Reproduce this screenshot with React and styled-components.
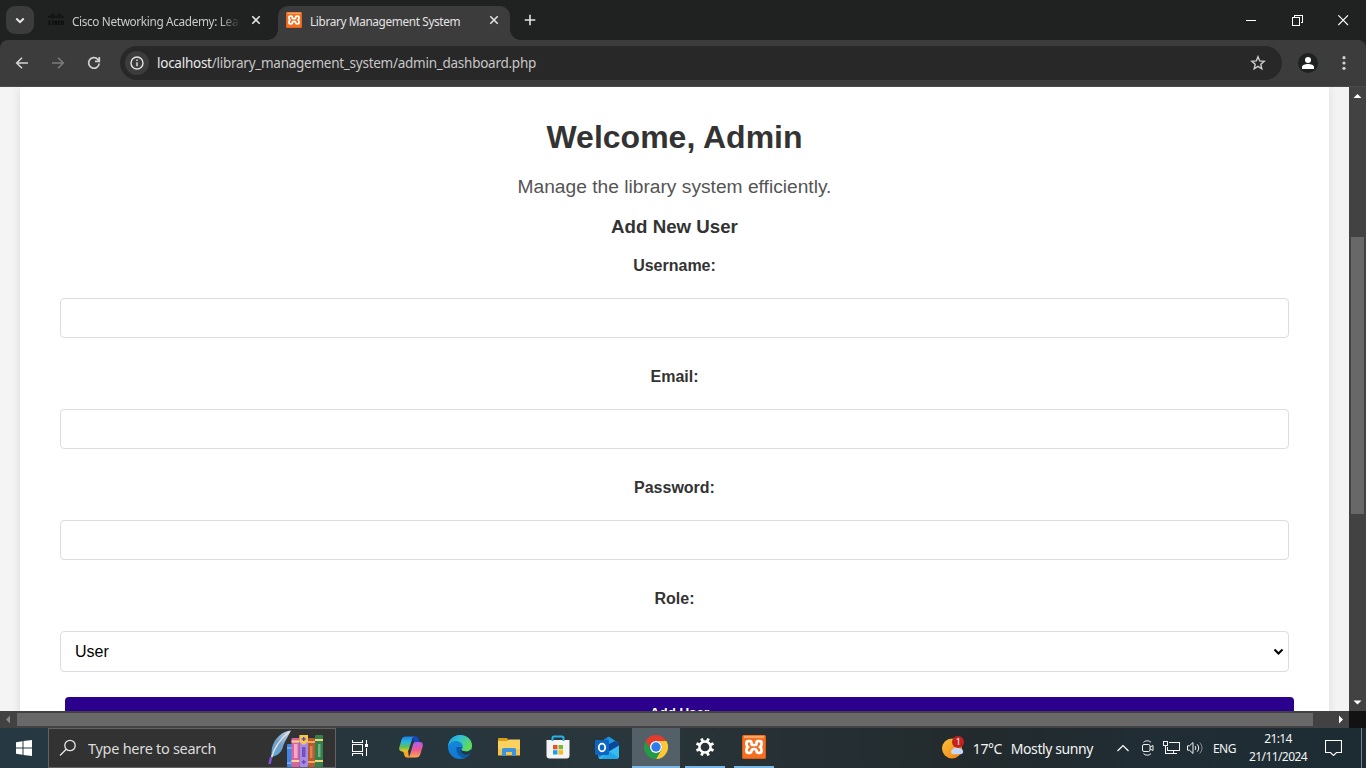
import React from "react";
import styled, { createGlobalStyle } from "styled-components";

const Global = createGlobalStyle`
  *, *::before, *::after { box-sizing: border-box; }
  html, body { margin: 0; padding: 0; height: 100%; overflow: hidden; }
  body { font-family: "Liberation Sans", Arial, sans-serif; background: #fff; }
  svg { display: block; flex: none; }
`;

const UI = `"Noto Sans", "Open Sans", sans-serif`;

const Screen = styled.div`
  width: 1366px;
  height: 768px;
  display: flex;
  flex-direction: column;
  overflow: hidden;
`;

/* ---------- Browser frame ---------- */
const TabStrip = styled.div`
  height: 40px;
  flex: none;
  display: flex;
  align-items: flex-end;
  background: #202221;
  padding-left: 6px;
`;
const TabSearch = styled.div`
  width: 28px;
  height: 28px;
  margin-bottom: 6px;
  border-radius: 9px;
  background: #3c3c3c;
  display: grid;
  place-items: center;
`;
const Tab = styled.div`
  position: relative;
  width: ${(p) => p.$width}px;
  height: 34px;
  display: flex;
  align-items: center;
  padding: 0 ${(p) => p.$right}px 6px ${(p) => p.$left}px;
  border-radius: 10px 10px 0 0;
  background: ${(p) => (p.$active ? "#3c3c3c" : "transparent")};
  ${(p) =>
    p.$active &&
    `
    &::before, &::after {
      content: "";
      position: absolute;
      bottom: 0;
      width: 10px;
      height: 10px;
    }
    &::before { left: -10px; background: radial-gradient(circle at 0 0, transparent 9.5px, #3c3c3c 10px); }
    &::after { right: -10px; background: radial-gradient(circle at 100% 0, transparent 9.5px, #3c3c3c 10px); }
  `}
`;
const TabTitle = styled.span`
  flex: 1;
  margin: 1px ${(p) => (p.$fade ? 8 : 12)}px 0 8px;
  overflow: hidden;
  white-space: nowrap;
  font: 11.8px/18px ${UI};
  letter-spacing: ${(p) => p.$spacing}px;
  color: ${(p) => (p.$fade ? "#c9cbca" : "#e3e3e3")};
  ${(p) => p.$fade && "mask-image: linear-gradient(90deg, #000 calc(100% - 20px), transparent);"}
`;
const NewTab = styled.div`
  width: 40px;
  height: 40px;
  display: grid;
  place-items: center;
`;
const WindowControls = styled.div`
  margin-left: auto;
  height: 40px;
  display: flex;
`;
const WindowButton = styled.div`
  width: 46px;
  height: 40px;
  display: grid;
  place-items: center;
`;
const ToolbarBack = styled.div`
  height: 47px;
  flex: none;
  background: #202221;
`;
const Toolbar = styled.div`
  height: 47px;
  display: flex;
  align-items: center;
  background: #3c3c3c;
  border-bottom: 1px solid #4a4a4a;
  border-radius: 8px 8px 0 0;
  padding: 0 4px;
`;
const NavButton = styled.div`
  width: 36px;
  height: 34px;
  display: grid;
  place-items: center;
`;
const Omnibox = styled.div`
  width: 1162px;
  height: 34px;
  margin-left: 8px;
  display: flex;
  align-items: center;
  justify-content: space-between;
  border-radius: 17px;
  background: #282828;
  padding: 0 16px 0 5px;
`;
const AddressGroup = styled.div`
  display: flex;
  align-items: center;
  gap: 8px;
`;
const SiteInfo = styled.div`
  width: 24px;
  height: 24px;
  border-radius: 50%;
  background: #3c3c3c;
  display: grid;
  place-items: center;
`;
const Url = styled.span`
  font: 13.5px/20px ${UI};
  letter-spacing: -0.26px;
  color: #c7c7c7;
  b { font-weight: 400; color: #e8e8e8; }
`;
const Avatar = styled.div`
  width: 20px;
  height: 20px;
  margin: 0 16px;
  border-radius: 50%;
  background: #1f2121;
  display: grid;
  place-items: center;
`;

/* ---------- Page ---------- */
const Body = styled.div`
  height: 624px;
  flex: none;
  display: flex;
`;
const Viewport = styled.main`
  width: 1349px;
  height: 624px;
  overflow: hidden;
  background: #f4f4f4;
  padding: 0 20px;
`;
const Panel = styled.section`
  height: 800px;
  background: #fff;
  padding: 31px 40px 0;
  box-shadow: 0 0 10px rgba(0, 0, 0, 0.1);
  text-align: center;
`;
const Title = styled.h1`
  margin: 0;
  font-size: 32px;
  line-height: 38px;
  color: #333;
`;
const Lead = styled.p`
  margin: 20px 0 0;
  font-size: 19.2px;
  line-height: 22px;
  color: #555;
`;
const FormTitle = styled.h3`
  margin: 18px 0 0;
  font-size: 18.72px;
  line-height: 22px;
  color: #333;
`;
const Field = styled.label`
  display: flex;
  flex-direction: column;
  align-items: center;
  gap: 22px;
  margin-top: ${(p) => (p.$first ? 18 : 29)}px;
  font-size: 16px;
  line-height: 20px;
  font-weight: 700;
  color: #333;
`;
const Control = styled.input`
  width: 100%;
  height: 40px;
  border: 1px solid #ddd;
  border-radius: 4px;
  background: #fff;
`;
const SelectBox = styled.div`
  width: 100%;
  height: 41px;
  display: flex;
  align-items: center;
  justify-content: space-between;
  border: 1px solid #ddd;
  border-radius: 4px;
  padding: 0 4px 0 14px;
  font-size: 16px;
  font-weight: 400;
  color: #000;
`;
const SubmitButton = styled.button`
  width: 1229px;
  height: 31px;
  display: block;
  margin: 25px -5px 0 5px;
  padding: 0;
  border: 0;
  border-radius: 4px;
  background: #2b008c;
  color: #fff;
  font: 700 13.33px "Liberation Sans", Arial, sans-serif;
`;

/* ---------- Scroll bars ---------- */
const VBar = styled.div`
  width: 17px;
  height: 624px;
  background: #424242;
  display: flex;
  flex-direction: column;
  align-items: center;
`;
const HBar = styled.div`
  width: 1349px;
  height: 17px;
  background: #424242;
  display: flex;
  align-items: center;
`;
const HRow = styled.div`
  height: 17px;
  flex: none;
  display: flex;
  background: #121212;
`;
const BarEnd = styled.div`
  width: 17px;
  height: 17px;
  display: grid;
  place-items: center;
`;
const VThumb = styled.div`
  width: 13px;
  height: 277px;
  margin: 133px 0 auto;
  background: #686868;
`;
const HThumb = styled.div`
  width: 1296px;
  height: 13px;
  margin-right: auto;
  background: #686868;
`;

/* ---------- Taskbar ---------- */
const Taskbar = styled.footer`
  height: 40px;
  flex: none;
  display: flex;
  background: linear-gradient(90deg, #263841 0%, #27363d 30%, #29363b 45%, #252e32 62%, #222a2d 72%, #202d34 84%, #1d2b32 100%);
  color: #f4f4f4;
  font-family: ${UI};
`;
const TaskButton = styled.div`
  width: 48px;
  height: 40px;
  display: grid;
  place-items: center;
`;
const SearchBox = styled.div`
  width: 288px;
  height: 40px;
  display: flex;
  align-items: center;
  padding: 0 11.5px 0 10px;
  border: 1px solid #626262;
  background: #323232;
`;
const SearchText = styled.span`
  flex: 1;
  margin: 0 0 1px 11px;
  font-size: 14.5px;
  line-height: 20px;
  letter-spacing: -0.28px;
  color: #dcdcdc;
  white-space: nowrap;
`;
const AppList = styled.div`
  display: flex;
  gap: 1px;
  margin-left: 3px;
`;
const AppButton = styled(TaskButton)`
  grid-template-rows: 38px 2px;
  background: ${(p) => (p.$active ? "#536067" : "transparent")};
`;
const RunningMark = styled.div`
  width: ${(p) => (p.$wide ? 48 : 40)}px;
  height: 2px;
  background: #78b7e8;
`;
const Tray = styled.div`
  margin-left: auto;
  display: flex;
  align-items: center;
`;
const Weather = styled.div`
  display: flex;
  align-items: center;
  gap: 8.8px;
  width: 171px;
  font-size: 14px;
  letter-spacing: ${(p) => p.$spacing}px;
  white-space: nowrap;
`;
const TrayIcon = styled.div`
  width: ${(p) => p.$width}px;
  display: grid;
  place-items: center;
`;
const Language = styled.span`
  width: 24px;
  margin-left: 3px;
  font-size: 12px;
  letter-spacing: -0.55px;
`;
const Clock = styled.div`
  width: 88px;
  padding-right: 6px;
  display: flex;
  flex-direction: column;
  align-items: center;
  font-size: 12px;
  line-height: 18px;
  letter-spacing: -0.6px;
`;
const ShowDesktop = styled.div`
  width: 5px;
  height: 40px;
  border-left: 1px solid #75808a;
`;

/* ---------- Icons ---------- */
const Stroke = ({ size = 16, box = 16, color = "#e3e3e3", w = 1.5, d, sharp }) => (
  <svg width={size} height={size} viewBox={`0 0 ${box} ${box}`} fill="none" stroke={color} strokeWidth={w} shapeRendering={sharp ? "crispEdges" : "auto"}>
    <path d={d} />
  </svg>
);

const Triangle = ({ d, color = "#fff" }) => (
  <svg width="17" height="17" viewBox="0 0 17 17" fill={color}><path d={d} /></svg>
);

const CiscoIcon = () => (
  <svg width="16" height="16" viewBox="0 0 16 16" fill="none" stroke="#080a0a">
    <path d="M1 4v2M3 2.500V6M5 1V6.500M7 3.500v2.500M9 3.500v2.500M11 1v5.500M13 2.500V6M15 4v2" />
    <path d="M3 9.200H1.200v3H3M4.800 8.500v4.200M9 9.200H6.800v1.500H8.500v1.600H6.300M12 9.200h-1.600v3H12M13.200 9.200h2v3h-2z" strokeWidth="1.100" />
  </svg>
);

const XamppIcon = ({ size }) => (
  <svg width={size} height={size} viewBox="0 0 24 24">
    <rect width="24" height="24" rx="2" fill="#f37022" />
    <path d="M2 1h20v2H2z" fill="#fba35f" />
    <path d="M0.500 2v20a1.500 1.500 0 0 0 1.500 1.500h20a1.500 1.500 0 0 0 1.500-1.500V2" fill="none" stroke="#d95d13" />
    <path d="M8 6.200H6.200C5 6.200 4.500 7 4.500 8v1.500c0 1.200.6 2 1.700 2.500-1.100.5-1.700 1.300-1.700 2.500V16c0 1 .5 1.800 1.700 1.800H7.500c1.300 0 1.900-.8 2-1.900.1-1.200.9-1.900 2.500-1.900s2.400.7 2.500 1.900c.1 1.100.7 1.900 2 1.900h1.300c1.200 0 1.700-.8 1.700-1.800v-1.500c0-1.200-.6-2-1.700-2.500 1.100-.5 1.700-1.300 1.700-2.500V8c0-1-.5-1.800-1.700-1.800H16c-1.100 0-1.500.7-1.500 1.800v.5c0 1-.6 1.500-1.500 1.500h-2c-.9 0-1.500-.5-1.500-1.500V8c0-1.100-.4-1.800-1.500-1.800z" fill="none" stroke="#fff" strokeWidth="2.700" strokeLinejoin="round" />
  </svg>
);

const BooksIcon = () => (
  <svg width="56" height="38" viewBox="0 0 56 38">
    <defs>
      <linearGradient id="feather" x1="1" y1="0" x2="0" y2="1">
        <stop offset="0" stopColor="#c7def0" />
        <stop offset=".55" stopColor="#6f9fce" />
        <stop offset="1" stopColor="#55aee0" />
      </linearGradient>
    </defs>
    <path d="M23 1.500C15 2 6 9 4 19l-1 9c6-1 10-4 12-10 1-5 5-10 8-16.500z" fill="url(#feather)" />
    <path d="M21 3C12 10 6 19 3 30" fill="none" stroke="#f4dfcd" strokeWidth="1.300" />
    <path d="M3.200 28L1.500 35" stroke="#7c54d2" strokeWidth="2.600" />
    <rect x="19" y="15" width="5" height="23" rx="1" fill="#3e86e6" />
    <path d="M19 19h5M19 34h5" stroke="#a6cbf7" />
    <rect x="23.500" y="9" width="8" height="29" rx="1" fill="#d9649d" />
    <rect x="26" y="15" width="3.500" height="14" fill="#f4a9cc" />
    <path d="M23.500 12.500h8M23.500 32h8" stroke="#f6d594" strokeWidth="2" />
    <rect x="31.500" y="6" width="8.500" height="32" rx="1" fill="#a78ae8" />
    <path d="M31.500 6H40v7l-4.200 3-4.300-3z" fill="#f3c74e" />
    <path d="M35.700 8v4M33.700 10h4M35.700 31v4M33.700 33h4" stroke="#6b48aa" strokeWidth="1.400" />
    <rect x="34" y="18" width="3.500" height="10" fill="#7350bd" />
    <rect x="40" y="9" width="7" height="29" rx="1" fill="#b75c2f" />
    <path d="M40 13h7M40 33h7" stroke="#eda85f" strokeWidth="2" />
    <rect x="42" y="17" width="2.500" height="12" fill="#de8450" />
    <rect x="47" y="6" width="8" height="32" rx="1" fill="#34804c" />
    <path d="M47 11h8M47 32h8" stroke="#f0d678" strokeWidth="2.200" />
    <rect x="50" y="15" width="2.500" height="13" fill="#6db67e" />
  </svg>
);

const CopilotIcon = () => (
  <svg width="24" height="22" viewBox="0 0 24 22">
    <defs>
      <linearGradient id="copA" x1="0" y1="0" x2="0" y2="1">
        <stop offset="0" stopColor="#1d7fe8" /><stop offset=".35" stopColor="#24b5e5" /><stop offset=".7" stopColor="#62bd55" /><stop offset="1" stopColor="#f0ca1f" />
      </linearGradient>
      <linearGradient id="copB" x1="0" y1="0" x2="0" y2="1">
        <stop offset="0" stopColor="#b05cf0" /><stop offset=".5" stopColor="#ed5a94" /><stop offset="1" stopColor="#fba94b" />
      </linearGradient>
    </defs>
    <path d="M14 .5h3c2 0 2.200 2 2.800 4 .4 1.300 1 1.500 2 1.500h-7z" fill="#1746c9" />
    <path d="M3 15h6l1 6.500H8c-2 0-2.500-1.500-3-3.500C4.600 16 4 15 3 15z" fill="#f6a623" />
    <path d="M7 .5h9c-2 0-2.600 1.500-3.200 3.500L10 13c-.6 1.800-1.400 2.500-3 2.500H3.500C.5 15.500-.3 13.500.4 11l2.200-7.500C3.300 1.500 4.500.5 7 .5z" fill="url(#copA)" />
    <path d="M17 21.500H8c2 0 2.600-1.500 3.200-3.500L14 8.500C14.600 6.800 15.400 6 17 6h3.500c3 0 3.800 2 3.100 4.500L21.400 18c-.7 2.500-2 3.500-4.400 3.500z" fill="url(#copB)" />
  </svg>
);

const EdgeIcon = () => (
  <svg width="24" height="24" viewBox="0 0 24 24">
    <defs>
      <linearGradient id="edgeTop" x1="0" y1="0" x2="1" y2=".5">
        <stop offset="0" stopColor="#1b9de2" /><stop offset=".5" stopColor="#32c2d0" /><stop offset="1" stopColor="#63dd50" />
      </linearGradient>
      <linearGradient id="edgeMid" x1="0" y1="0" x2="0" y2="1">
        <stop offset="0" stopColor="#1589dc" /><stop offset="1" stopColor="#1179d0" />
      </linearGradient>
    </defs>
    <circle cx="12" cy="12" r="12" fill="url(#edgeMid)" />
    <path d="M8.500 12c-1 5.500 3 10.500 8 11.100A12 12 0 0 0 22.500 18c-5 2.500-9.500.5-9.500-3 0-1.200 1-2 1-3z" fill="#0c59a4" />
    <path d="M0 11.500C.5 5 5.500 0 12 0c6.600 0 12 4.600 12 10.500 0 3.600-2.500 6-6 6-2.600 0-4.200-.8-4.200-1.700 0-.7 1-1.200 1-3.200C14.800 8.500 12 6 8 6 4 6 1 8.500 0 11.500z" fill="url(#edgeTop)" />
    <path d="M13.800 14.800c0 .9 1.600 1.700 4.200 1.700 2 0 3.700-.8 4.800-2.100l1.200 1.100-2 3.100c-4.800 2.200-9 0-9-3.400z" fill="#26343b" />
  </svg>
);

const FolderIcon = () => (
  <svg width="22" height="18" viewBox="0 0 22 18">
    <path d="M0 .8A.8.8 0 0 1 .8 0H9l1.500 2H22v8H0z" fill="#dd9b16" />
    <path d="M0 3h9l2-1.500h11V17H0z" fill="#fbd160" />
    <path d="M0 11h22v6.500H0z" fill="#f5c44f" />
    <path d="M4 18v-6.500A1.500 1.500 0 0 1 5.500 10h11a1.500 1.500 0 0 1 1.500 1.500V18h-4v-4H8v4z" fill="#3a94df" />
  </svg>
);

const StoreIcon = () => (
  <svg width="24" height="24" viewBox="0 0 24 24">
    <path d="M6.500 6V3A1.500 1.500 0 0 1 8 1.500h8A1.500 1.500 0 0 1 17.500 3v3" fill="none" stroke="#27b1ec" strokeWidth="2" />
    <path d="M.5 5h23v15.500a3 3 0 0 1-3 3h-17a3 3 0 0 1-3-3z" fill="#f4f4f4" />
    <path d="M6.500 5v1M17.500 5v1" stroke="#27b1ec" strokeWidth="2" />
    <path d="M7 10h4.500v4.300H7z" fill="#f04e24" /><path d="M12.500 10H17v4.300h-4.500z" fill="#7db92b" />
    <path d="M7 15.200h4.500v4.300H7z" fill="#1aa0e8" /><path d="M12.500 15.200H17v4.300h-4.500z" fill="#fbb81b" />
  </svg>
);

const OutlookIcon = () => (
  <svg width="24" height="23" viewBox="0 0 24 23">
    <path d="M3 8L12.500 1a2 2 0 0 1 2 0L24 7.500V20a3 3 0 0 1-3 3H6a3 3 0 0 1-3-3z" fill="#1a83d7" />
    <path d="M13.500.5L24 7.500 14 13z" fill="#1d9ce9" />
    <path d="M14 8l6-3 4 2.500v2L12 17z" fill="#0c4797" />
    <path d="M24 9.500V20a3 3 0 0 1-3 3H6c-1 0-2-.5-2.500-1.300z" fill="#35bdf2" />
    <path d="M14 15l9.500 6.500c-.5.900-1.500 1.500-2.500 1.500H6z" fill="#24a6e8" />
    <rect y="4" width="14" height="15" rx="1" fill="#0e65c1" />
    <ellipse cx="7" cy="11.500" rx="3.200" ry="3.800" fill="none" stroke="#fff" strokeWidth="1.800" />
  </svg>
);

const ChromeIcon = () => (
  <svg width="24" height="24" viewBox="0 0 24 24">
    <path d="M1.600 6A12 12 0 0 1 22.400 6H12a6 6 0 0 0-5.200 9z" fill="#e33b2e" />
    <path d="M22.400 6A12 12 0 0 1 12 24l5.200-9A6 6 0 0 0 12 6z" fill="#fcc934" />
    <path d="M12 24A12 12 0 0 1 1.600 6l5.200 9a6 6 0 0 0 10.400 0z" fill="#229a48" />
    <circle cx="12" cy="12" r="6" fill="#fff" />
    <circle cx="12" cy="12" r="4.700" fill="#2e7be9" />
  </svg>
);

const GearIcon = () => (
  <svg width="20" height="20" viewBox="0 0 20 20" fill="none" stroke="#fff">
    <circle cx="10" cy="10" r="5.600" strokeWidth="2.500" />
    <g strokeWidth="2.800">
      {[22.5, 67.5, 112.5, 157.5, 202.5, 247.5, 292.5, 337.5].map((a) => (
        <path key={a} d="M10 .8v3" transform={`rotate(${a} 10 10)`} />
      ))}
    </g>
  </svg>
);

const WeatherIcon = () => (
  <svg width="22" height="24" viewBox="0 0 22 24">
    <defs>
      <linearGradient id="sun" x1="0" y1="0" x2="1" y2="1">
        <stop offset="0" stopColor="#fbc53b" /><stop offset="1" stopColor="#f17c10" />
      </linearGradient>
    </defs>
    <circle cx="10" cy="12.500" r="10" fill="url(#sun)" />
    <path d="M11 18.300a2.700 2.700 0 0 1 0-5.200 4 4 0 0 1 7-.3 2.800 2.800 0 0 1 1 5.500z" fill="#c3d7f8" />
    <circle cx="16" cy="6" r="6" fill="#c5221f" />
    <text x="16" y="9.400" textAnchor="middle" fontSize="9" fill="#fff" fontFamily="Noto Sans">1</text>
  </svg>
);

const CLOSE = "M4.300 4.300l7.400 7.400M11.700 4.300l-7.400 7.400";
const apps = [
  { name: "copilot", icon: <CopilotIcon /> },
  { name: "edge", icon: <EdgeIcon /> },
  { name: "explorer", icon: <FolderIcon /> },
  { name: "store", icon: <StoreIcon /> },
  { name: "outlook", icon: <OutlookIcon /> },
  { name: "chrome", icon: <ChromeIcon />, active: true, running: true },
  { name: "settings", icon: <GearIcon />, running: true },
  { name: "xampp", icon: <XamppIcon size={24} />, running: true },
];

export default function App() {
  return (
    <Screen>
      <Global />
      <TabStrip>
        <TabSearch><Stroke color="#e8e8e8" w={2} d="M4.300 6.500L8 10.200l3.700-3.700" /></TabSearch>
        <Tab $width={244} $left={14} $right={14}>
          <CiscoIcon />
          <TabTitle $fade $spacing={-0.36}>Cisco Networking Academy: Learn</TabTitle>
          <Stroke w={1.600} d={CLOSE} />
        </Tab>
        <Tab $active $width={232} $left={8} $right={8}>
          <XamppIcon size={16} />
          <TabTitle $spacing={-0.36}>Library Management System</TabTitle>
          <Stroke w={1.600} d={CLOSE} />
        </Tab>
        <NewTab><Stroke w={1.600} d="M8 2.700v10.600M2.700 8h10.600" /></NewTab>
        <WindowControls>
          <WindowButton><Stroke size={11} box={11} color="#fff" w={1} d="M0 5.500h10" sharp /></WindowButton>
          <WindowButton><Stroke size={11} box={11} color="#fff" w={1} d="M.5 2.500h7v8h-7zM2.500 2.500v-2h8v7h-2" sharp /></WindowButton>
          <WindowButton><Stroke size={11} box={11} color="#fff" w={1.100} d="M.3.300l9.700 9.700M10 .3L.3 10" /></WindowButton>
        </WindowControls>
      </TabStrip>
      <ToolbarBack>
        <Toolbar>
          <NavButton><Stroke color="#d2d2d2" w={1.600} d="M14 8H3M8 2.700L2.700 8 8 13.300" /></NavButton>
          <NavButton><Stroke color="#7b7b7b" w={1.600} d="M2 8h11M8 2.700L13.300 8 8 13.300" /></NavButton>
          <NavButton><Stroke color="#d2d2d2" w={1.700} d="M13.200 8.500A5.300 5.300 0 1 1 11.800 4.300L13 5.500M13.300 2v4.300H9" /></NavButton>
          <Omnibox>
            <AddressGroup>
              <SiteInfo>
                <svg width="14" height="14" viewBox="0 0 14 14" fill="none" stroke="#e3e3e3" strokeWidth="1.400">
                  <circle cx="7" cy="7" r="6" /><path d="M7 6.200v4M7 3.600v1.500" />
                </svg>
              </SiteInfo>
              <Url><b>localhost</b>/library_management_system/admin_dashboard.php</Url>
            </AddressGroup>
            <Stroke color="#cfcfcf" w={1.400} d="M8 1.700l1.700 4.200 4.500.4-3.400 3 1 4.500L8 11.400l-3.800 2.400 1-4.500-3.400-3 4.500-.4z" />
          </Omnibox>
          <Avatar>
            <svg width="12" height="12" viewBox="0 0 12 12" fill="#fff">
              <circle cx="6" cy="3" r="3" /><path d="M0 12v-2c0-2 3-3 6-3s6 1 6 3v2z" />
            </svg>
          </Avatar>
          <svg width="20" height="16" viewBox="0 0 20 16" fill="#d2d2d2">
            <circle cx="10" cy="2.700" r="1.600" /><circle cx="10" cy="8" r="1.600" /><circle cx="10" cy="13.300" r="1.600" />
          </svg>
        </Toolbar>
      </ToolbarBack>

      <Body>
        <Viewport>
          <Panel>
            <Title>Welcome, Admin</Title>
            <Lead>Manage the library system efficiently.</Lead>
            <FormTitle>Add New User</FormTitle>
            <Field $first>Username:<Control /></Field>
            <Field>Email:<Control /></Field>
            <Field>Password:<Control /></Field>
            <Field as="div">
              Role:
              <SelectBox>
                User
                <Stroke size={11} box={11} color="#000" w={2} d="M1.500 3.500l4 4 4-4" />
              </SelectBox>
            </Field>
            <SubmitButton>Add User</SubmitButton>
          </Panel>
        </Viewport>
        <VBar>
          <BarEnd><Triangle d="M4.500 11L8.500 7l4 4z" /></BarEnd>
          <VThumb />
          <BarEnd><Triangle d="M4.500 6.500l4 4 4-4z" /></BarEnd>
        </VBar>
      </Body>
      <HRow>
        <HBar>
          <BarEnd><Triangle color="#8a8a8a" d="M10 4.500l-4 4 4 4z" /></BarEnd>
          <HThumb />
          <BarEnd><Triangle d="M7 4.500l4 4-4 4z" /></BarEnd>
        </HBar>
      </HRow>

      <Taskbar>
        <TaskButton>
          <svg width="16" height="16" viewBox="0 0 16 16" fill="#fff">
            <path d="M0 2.200L6.500 1.300v6.200H0zM7.500 1.100L16 0v7.500H7.500zM0 8.500h6.500v6.200L0 13.800zM7.500 8.500H16V16l-8.500-1.100z" />
          </svg>
        </TaskButton>
        <SearchBox>
          <svg width="18" height="18" viewBox="0 0 18 18" fill="none" stroke="#e6e6e6" strokeWidth="1.300">
            <circle cx="11" cy="6.500" r="5.200" /><path d="M7.200 10.300L1 16.500" />
          </svg>
          <SearchText>Type here to search</SearchText>
          <BooksIcon />
        </SearchBox>
        <TaskButton>
          <svg width="18" height="16" viewBox="0 0 18 16" fill="none" stroke="#fff" strokeWidth="1" shapeRendering="crispEdges">
            <path d="M1.500 4.500h10v7h-10zM1.500 0v2.500h10V0M1.500 16v-2.500h10V16M15.500 0v4M15.500 7.500V16" />
            <path d="M14 4h3v3h-3z" fill="#fff" stroke="none" />
          </svg>
        </TaskButton>
        <AppList>
          {apps.map((a) => (
            <AppButton key={a.name} $active={a.active}>
              {a.icon}
              {a.running && <RunningMark $wide={a.active} />}
            </AppButton>
          ))}
        </AppList>
        <Tray>
          <Weather $spacing={-0.42}>
            <WeatherIcon />
            <span>17°C</span>
            <span>Mostly sunny</span>
          </Weather>
          <TrayIcon $width={20}><Stroke size={12} box={12} color="#fff" w={1.200} d="M.5 9L6 3.500 11.500 9" /></TrayIcon>
          <TrayIcon $width={30}>
            <svg width="12" height="16" viewBox="0 0 12 16" fill="none" stroke="#f2f2f2">
              <rect x=".5" y="4.500" width="7.500" height="7" rx="1.500" /><path d="M8 7.200l3-1.700v5l-3-1.700M1.500 2.300C3.500.3 7 .3 9 2.300M1.500 13.700c2 2 5.500 2 7.500 0" />
            </svg>
          </TrayIcon>
          <TrayIcon $width={17}>
            <svg width="17" height="14" viewBox="0 0 17 14" fill="none" stroke="#f2f2f2" shapeRendering="crispEdges">
              <path d="M5.500 1.500h11v8h-12v-4M10.500 9.500v3M6 12.500h8M.5.500h4v4h-4zM2.500 4.500v8h3" />
            </svg>
          </TrayIcon>
          <TrayIcon $width={30}>
            <svg width="17" height="14" viewBox="0 0 17 14" fill="none" stroke="#f2f2f2">
              <path d="M.5 4.800h2L6 1.500v11L2.500 9.200h-2zM8 5c1 1.200 1 2.800 0 4M10.200 3.300c2 2.200 2 5.200 0 7.400" /><path d="M12.700 1.500c3 3.200 3 7.800 0 11" stroke="#87929a" />
            </svg>
          </TrayIcon>
          <Language>ENG</Language>
          <Clock><span>21:14</span><span>21/11/2024</span></Clock>
          <TrayIcon $width={16}>
            <svg width="17" height="16" viewBox="0 0 17 16" fill="none" stroke="#fff" strokeWidth="1.100">
              <path d="M.5.500h16v12h-5L8.500 15.500l-3-3h-5z" />
            </svg>
          </TrayIcon>
          <TrayIcon $width={20} />
          <ShowDesktop />
        </Tray>
      </Taskbar>
    </Screen>
  );
}
